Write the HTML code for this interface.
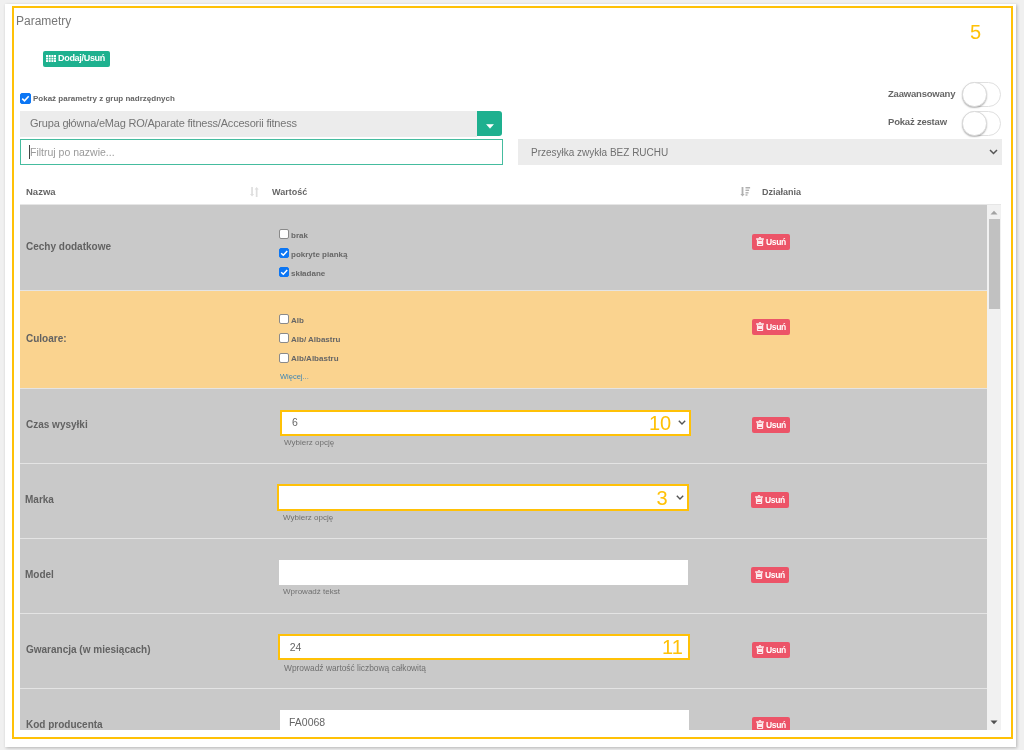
<!DOCTYPE html>
<html><head><meta charset="utf-8">
<style>
*{box-sizing:border-box;margin:0;padding:0}
html,body{width:1024px;height:750px;overflow:hidden;background:#f0f0f0;font-family:"Liberation Sans",sans-serif;color:#666}
.a{position:absolute}
#panel{left:5px;top:4px;width:1011px;height:743px;background:#fff;box-shadow:1px 1px 3px rgba(0,0,0,.25)}
#frame{left:12px;top:6px;width:1001px;height:733px;border:2px solid #ffc107;z-index:50}
.t{white-space:nowrap;line-height:1}
.num{color:#ffc107;font-size:20px;line-height:1;z-index:40;white-space:nowrap}
.btn-g{background:#1eb18f;border-radius:2px;color:#fff}
.cb{width:10px;height:10px;border:1px solid #8a8a8a;border-radius:2px;background:#fff}
.cb.on{background:#0c76f4;border-color:#0c76f4}
.toggle{width:39px;height:24.5px;border:1px solid #e0e0e0;border-radius:12.5px;background:#fff}
.knob{left:-1px;top:-1px;width:24.5px;height:24.5px;border-radius:50%;background:#fff;border:1px solid #dadada;box-shadow:0 1px 1.5px rgba(0,0,0,.28)}
#tbody{left:20px;top:205px;width:981px;height:525px;overflow:hidden;background:#fff}
.row{left:0;width:967px;background:#c9c9c9}
.row.o{background:#fad38f}
.sep{left:0;width:967px;height:1px;background:#e4e4e4}
.name{left:6px;font-size:10px;font-weight:bold;color:#626262;margin-top:.6px}
.del{left:732px;width:38px;height:16px;background:#ec5468;border-radius:2px;color:#fff}
.del span{position:absolute;left:14px;top:2.7px;font-size:8.5px;font-weight:bold;letter-spacing:-.35px}
.del svg{position:absolute;left:4px;top:3.2px}
.inp{left:259px;width:410px;height:25px;background:#fff}
.ob{border:2px solid #ffc107}
.hint{font-size:8px;color:#707070}
.chk-l{font-size:8px;font-weight:bold;color:#666;margin-top:1px}
.ckl{left:259px;width:10px;height:10px}
.wrap{position:absolute;left:0;top:0;width:1024px;height:750px;will-change:transform}</style></head>
<body><div class="wrap">
<div id="panel" class="a"></div>
<div id="frame" class="a"></div>

<div class="a t" style="left:16px;top:14.5px;font-size:12px;color:#777">Parametry</div>
<div class="a num" style="left:970px;top:22px">5</div>

<div class="a btn-g" style="left:43px;top:51px;width:67px;height:16px">
  <svg class="a" style="left:3px;top:4px" width="10" height="7" viewBox="0 0 10 7"><g fill="#fff"><rect x="0" y="0" width="2" height="2"/><rect x="2.7" y="0" width="2" height="2"/><rect x="5.4" y="0" width="2" height="2"/><rect x="8" y="0" width="2" height="2"/><rect x="0" y="2.6" width="2" height="2"/><rect x="2.7" y="2.6" width="2" height="2"/><rect x="5.4" y="2.6" width="2" height="2"/><rect x="8" y="2.6" width="2" height="2"/><rect x="0" y="5.1" width="2" height="2"/><rect x="2.7" y="5.1" width="2" height="2"/><rect x="5.4" y="5.1" width="2" height="2"/><rect x="8" y="5.1" width="2" height="2"/></g></svg>
  <div class="a t" style="left:15px;top:3px;font-size:9px;font-weight:bold;letter-spacing:-.3px">Dodaj/Usuń</div>
</div>

<!-- show parents checkbox -->
<div class="a cb on" style="left:20px;top:93px;width:11px;height:11px"><svg class="a" style="left:0;top:0" width="9" height="9" viewBox="0 0 9 9"><path d="M1.2 4.6 L3.5 6.8 L7.7 2.2" fill="none" stroke="#fff" stroke-width="1.6"/></svg></div>
<div class="a t" style="left:33px;top:95px;font-size:8px;font-weight:bold;color:#666">Pokaż parametry z grup nadrzędnych</div>

<!-- toggles -->
<div class="a t" style="left:888px;top:89px;font-size:9.5px;font-weight:bold;color:#666;letter-spacing:-.2px">Zaawansowany</div>
<div class="a t" style="left:888px;top:117px;font-size:9.5px;font-weight:bold;color:#666;letter-spacing:-.2px">Pokaż zestaw</div>
<div class="a toggle" style="left:962px;top:82px"><div class="a knob"></div></div>
<div class="a toggle" style="left:962px;top:111px"><div class="a knob"></div></div>

<!-- group select -->
<div class="a" style="left:20px;top:111px;width:457px;height:26px;background:#ececec"></div>
<div class="a t" style="left:30px;top:118px;font-size:11px;color:#757575;letter-spacing:-.2px">Grupa główna/eMag RO/Aparate fitness/Accesorii fitness</div>
<div class="a" style="left:477px;top:111px;width:25px;height:24.5px;background:#1eb08f;border-radius:0 3px 3px 0"><svg class="a" style="left:8.5px;top:12.7px" width="8" height="5" viewBox="0 0 8 5"><path d="M0.6 0.5 L7.4 0.5 L4 4.3 Z" fill="#fff" stroke="#fff" stroke-width="0.6" stroke-linejoin="round"/></svg></div>

<!-- filter input -->
<div class="a" style="left:20px;top:139px;width:483px;height:26px;border:1px solid #45bc9f;background:#fff"></div>
<div class="a" style="left:29px;top:145px;width:1px;height:14px;background:#444"></div>
<div class="a t" style="left:30px;top:147px;font-size:10.5px;color:#9a9a9a">Filtruj po nazwie...</div>

<!-- shipping select -->
<div class="a" style="left:518px;top:139px;width:484px;height:26px;background:#ececec"></div>
<div class="a t" style="left:531px;top:148px;font-size:10px;color:#707070">Przesyłka zwykła BEZ RUCHU</div>
<svg class="a" style="left:989px;top:149px" width="9" height="6" viewBox="0 0 9 6"><path d="M1 1 L4.5 4.5 L8 1" fill="none" stroke="#555" stroke-width="1.5"/></svg>

<!-- table header -->
<div class="a t" style="left:26px;top:187px;font-size:9.5px;font-weight:bold;color:#666">Nazwa</div>
<div class="a t" style="left:272px;top:187.5px;font-size:9px;font-weight:bold;color:#666;letter-spacing:0px">Wartość</div>
<div class="a t" style="left:762px;top:187.5px;font-size:9px;font-weight:bold;color:#666">Działania</div>
<svg class="a" style="left:250px;top:187px" width="9" height="10" viewBox="0 0 9 10"><g fill="#dedede"><rect x="1.2" y="0" width="1.7" height="8"/><path d="M0 7 H4.1 L2.05 9.6Z"/><rect x="5.8" y="2" width="1.7" height="8"/><path d="M4.6 2.6 H8.7 L6.65 0Z"/></g></svg>
<svg class="a" style="left:740px;top:187px" width="11" height="10" viewBox="0 0 11 10"><g fill="#b0b0b0"><rect x="1.6" y="0" width="1.8" height="7.8"/><path d="M0.4 7 H4.6 L2.5 9.6Z"/><rect x="5.5" y="0" width="4.6" height="1.5"/><rect x="5.5" y="2.6" width="3.6" height="1.4"/><rect x="5.5" y="5.1" width="3" height="1.4"/><rect x="5.5" y="7.3" width="2" height="1.4"/></g></svg>
<div class="a" style="left:20px;top:204px;width:981px;height:1px;background:#e6e6e6"></div>

<!-- table body -->
<div id="tbody" class="a">
 <!-- row 1 -->
 <div class="a row" style="top:0;height:85px">
  <div class="a t name" style="top:36px">Cechy dodatkowe</div>
  <div class="a cb ckl" style="top:24px"></div><div class="a t chk-l" style="left:271px;top:25.5px">brak</div><div class="a cb on ckl" style="top:43px"><svg class="a" style="left:0;top:0" width="9" height="9" viewBox="0 0 9 9"><path d="M1.2 4.3 L3.3 6.3 L7.2 2" fill="none" stroke="#fff" stroke-width="1.5"/></svg></div><div class="a t chk-l" style="left:271px;top:44.5px">pokryte pianką</div><div class="a cb on ckl" style="top:62px"><svg class="a" style="left:0;top:0" width="9" height="9" viewBox="0 0 9 9"><path d="M1.2 4.3 L3.3 6.3 L7.2 2" fill="none" stroke="#fff" stroke-width="1.5"/></svg></div><div class="a t chk-l" style="left:271px;top:63.5px">składane</div><div class="a del" style="top:29px"><svg width="8" height="9" viewBox="0 0 8 9"><g fill="#fde9ec"><path d="M2.6 1.4 Q2.8 0 4 0 Q5.2 0 5.4 1.4Z"/><rect x="0" y="1.3" width="8" height="1.4" rx="0.4"/><path d="M0.9 2.6 H7.2 V8.2 Q7.2 9 6.4 9 H1.7 Q0.9 9 0.9 8.2Z M2.2 3.3 V4.1 H5.9 V3.3Z M2.2 7.1 V7.9 H5.9 V7.1Z" fill-rule="evenodd"/></g></svg><span>Usuń</span></div>
 </div>
 <div class="a sep" style="top:85px"></div>
 <!-- row 2 -->
 <div class="a row o" style="top:86px;height:97px">
  <div class="a t name" style="top:42px">Culoare:</div>
  <div class="a cb ckl" style="top:23.4px"></div><div class="a t chk-l" style="left:271px;top:24.9px">Alb</div><div class="a cb ckl" style="top:42.3px"></div><div class="a t chk-l" style="left:271px;top:43.8px">Alb/ Albastru</div><div class="a cb ckl" style="top:61.7px"></div><div class="a t chk-l" style="left:271px;top:63.2px">Alb/Albastru</div><div class="a t" style="left:260px;top:82px;font-size:7.5px;color:#3f86b5">Więcej...</div><div class="a del" style="top:28.3px"><svg width="8" height="9" viewBox="0 0 8 9"><g fill="#fde9ec"><path d="M2.6 1.4 Q2.8 0 4 0 Q5.2 0 5.4 1.4Z"/><rect x="0" y="1.3" width="8" height="1.4" rx="0.4"/><path d="M0.9 2.6 H7.2 V8.2 Q7.2 9 6.4 9 H1.7 Q0.9 9 0.9 8.2Z M2.2 3.3 V4.1 H5.9 V3.3Z M2.2 7.1 V7.9 H5.9 V7.1Z" fill-rule="evenodd"/></g></svg><span>Usuń</span></div>
 </div>
 <div class="a sep" style="top:183px"></div>
 <!-- row 3 -->
 <div class="a row" style="top:184px;height:74px">
  <div class="a t name" style="top:30px">Czas wysyłki</div>
  <div class="a inp ob" style="left:259.5px;top:20.5px;width:411px;height:26.5px"></div><div class="a t" style="left:272px;top:28px;font-size:10.5px;color:#666">6</div><div class="a num" style="left:629px;top:24px">10</div><svg class="a" style="left:657.5px;top:30.5px" width="8" height="5" viewBox="0 0 8 5"><path d="M0.8 0.8 L4 4 L7.2 0.8" fill="none" stroke="#555" stroke-width="1.4"/></svg><div class="a t hint" style="left:264px;top:50px">Wybierz opcję</div><div class="a del" style="top:28.3px"><svg width="8" height="9" viewBox="0 0 8 9"><g fill="#fde9ec"><path d="M2.6 1.4 Q2.8 0 4 0 Q5.2 0 5.4 1.4Z"/><rect x="0" y="1.3" width="8" height="1.4" rx="0.4"/><path d="M0.9 2.6 H7.2 V8.2 Q7.2 9 6.4 9 H1.7 Q0.9 9 0.9 8.2Z M2.2 3.3 V4.1 H5.9 V3.3Z M2.2 7.1 V7.9 H5.9 V7.1Z" fill-rule="evenodd"/></g></svg><span>Usuń</span></div>
 </div>
 <div class="a sep" style="top:258px"></div>
 <div class="a row" style="top:259px;height:74px;left:-1px;width:968px">
  <div class="a t name" style="top:30px">Marka</div>
  <div class="a inp ob" style="left:258px;top:20.3px;width:411.5px;height:27px"></div><div class="a num" style="left:637.5px;top:23.5px">3</div><svg class="a" style="left:656.5px;top:30.5px" width="8" height="5" viewBox="0 0 8 5"><path d="M0.8 0.8 L4 4 L7.2 0.8" fill="none" stroke="#555" stroke-width="1.4"/></svg><div class="a t hint" style="left:264px;top:49.5px">Wybierz opcję</div><div class="a del" style="top:28.3px"><svg width="8" height="9" viewBox="0 0 8 9"><g fill="#fde9ec"><path d="M2.6 1.4 Q2.8 0 4 0 Q5.2 0 5.4 1.4Z"/><rect x="0" y="1.3" width="8" height="1.4" rx="0.4"/><path d="M0.9 2.6 H7.2 V8.2 Q7.2 9 6.4 9 H1.7 Q0.9 9 0.9 8.2Z M2.2 3.3 V4.1 H5.9 V3.3Z M2.2 7.1 V7.9 H5.9 V7.1Z" fill-rule="evenodd"/></g></svg><span>Usuń</span></div>
 </div>
 <div class="a sep" style="top:333px"></div>
 <div class="a row" style="top:334px;height:74px;left:-1px;width:968px">
  <div class="a t name" style="top:30px">Model</div>
  <div class="a inp" style="left:259.6px;top:21px;width:409.6px;height:24.5px"></div><div class="a t hint" style="left:264px;top:49px">Wprowadź tekst</div><div class="a del" style="top:28.3px"><svg width="8" height="9" viewBox="0 0 8 9"><g fill="#fde9ec"><path d="M2.6 1.4 Q2.8 0 4 0 Q5.2 0 5.4 1.4Z"/><rect x="0" y="1.3" width="8" height="1.4" rx="0.4"/><path d="M0.9 2.6 H7.2 V8.2 Q7.2 9 6.4 9 H1.7 Q0.9 9 0.9 8.2Z M2.2 3.3 V4.1 H5.9 V3.3Z M2.2 7.1 V7.9 H5.9 V7.1Z" fill-rule="evenodd"/></g></svg><span>Usuń</span></div>
 </div>
 <div class="a sep" style="top:408px"></div>
 <div class="a row" style="top:409px;height:74px">
  <div class="a t name" style="top:30px">Gwarancja (w miesiącach)</div>
  <div class="a inp ob" style="left:257.6px;top:20.4px;width:412.4px;height:25.3px"></div><div class="a t" style="left:269.7px;top:28px;font-size:10.5px;color:#666">24</div><div class="a num" style="left:642px;top:22.5px">11</div><div class="a t hint" style="left:264px;top:50px;font-size:8.4px">Wprowadź wartość liczbową całkowitą</div><div class="a del" style="top:28.3px"><svg width="8" height="9" viewBox="0 0 8 9"><g fill="#fde9ec"><path d="M2.6 1.4 Q2.8 0 4 0 Q5.2 0 5.4 1.4Z"/><rect x="0" y="1.3" width="8" height="1.4" rx="0.4"/><path d="M0.9 2.6 H7.2 V8.2 Q7.2 9 6.4 9 H1.7 Q0.9 9 0.9 8.2Z M2.2 3.3 V4.1 H5.9 V3.3Z M2.2 7.1 V7.9 H5.9 V7.1Z" fill-rule="evenodd"/></g></svg><span>Usuń</span></div>
 </div>
 <div class="a sep" style="top:483px"></div>
 <div class="a row" style="top:484px;height:74px">
  <div class="a t name" style="top:30px">Kod producenta</div>
  <div class="a inp" style="left:259.5px;top:21px;width:409.5px;height:25px"></div><div class="a t" style="left:269px;top:28px;font-size:10.5px;color:#666">FA0068</div><div class="a del" style="top:28.3px"><svg width="8" height="9" viewBox="0 0 8 9"><g fill="#fde9ec"><path d="M2.6 1.4 Q2.8 0 4 0 Q5.2 0 5.4 1.4Z"/><rect x="0" y="1.3" width="8" height="1.4" rx="0.4"/><path d="M0.9 2.6 H7.2 V8.2 Q7.2 9 6.4 9 H1.7 Q0.9 9 0.9 8.2Z M2.2 3.3 V4.1 H5.9 V3.3Z M2.2 7.1 V7.9 H5.9 V7.1Z" fill-rule="evenodd"/></g></svg><span>Usuń</span></div>
 </div>
 <!-- scrollbar -->
 <div class="a" style="left:967px;top:0;width:14px;height:525px;background:#f1f1f1"></div>
 <div class="a" style="left:969px;top:14px;width:11px;height:90px;background:#c1c1c1"></div>
 <svg class="a" style="left:970px;top:5px" width="8" height="5" viewBox="0 0 8 5"><path d="M0.5 4.5 L4 0.8 L7.5 4.5Z" fill="#a3a3a3"/></svg>
 <svg class="a" style="left:970px;top:515px" width="8" height="5" viewBox="0 0 8 5"><path d="M0.5 0.5 L4 4.2 L7.5 0.5Z" fill="#505050"/></svg>
</div>

</div></body></html>
